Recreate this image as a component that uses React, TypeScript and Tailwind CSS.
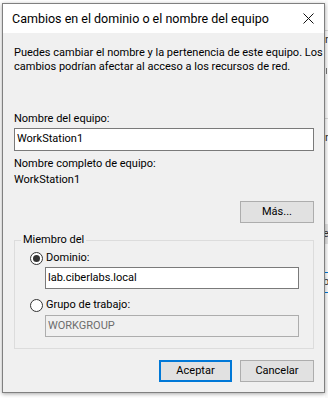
import React from "react";

const font = { fontFamily: "Roboto, 'Liberation Sans', Arial, sans-serif" };

function Radio({ checked }: { checked: boolean }) {
  return (
    <span className="w-[13px] h-[13px] rounded-full border border-[#333333] bg-white flex items-center justify-center shrink-0">
      {checked && <span className="w-[7px] h-[7px] rounded-full bg-[#333333]" />}
    </span>
  );
}

function Btn({ label, primary, w }: { label: string; primary?: boolean; w: string }) {
  return (
    <div
      className={
        "h-[22px] flex items-center justify-center bg-[#e1e1e1] text-[11px] text-black " +
        w +
        (primary ? " border-2 border-[#0078d7]" : " border border-[#adadad]")
      }
    >
      {label}
    </div>
  );
}

export default function App() {
  return (
    <div className="w-[328px] h-[398px] bg-white relative overflow-hidden" style={font}>
      {/* background window fragments on the right */}
      <div className="absolute left-[325px] top-0 w-[3px] h-full bg-[#fafafa]">
        <div className="absolute top-[30px] left-0 w-[3px] h-px bg-[#d8d8d8]" />
        <div className="absolute top-[33px] left-0 text-[11px] leading-[14px] text-[#333] whitespace-nowrap">re</div>
        <div className="absolute top-[68px] left-[1px] w-px h-[6px] bg-[#777]" />
        <div className="absolute top-[118px] left-0 w-[3px] h-px bg-[#d8d8d8]" />
        <div className="absolute top-[131px] left-0 text-[11px] leading-[14px] text-[#333]">r</div>
        <div className="absolute top-[224px] left-0 w-[3px] h-[20px] bg-[#e1e1e1]" />
        <div className="absolute top-[227px] left-[-2px] text-[11px] leading-[14px] text-[#333]">e</div>
        <div className="absolute top-[272px] left-0 w-[3px] h-[21px] border-y border-[#0078d7]" />
        <div className="absolute top-[275px] left-[-2px] text-[11px] leading-[14px] text-[#333]">b</div>
      </div>

      {/* dialog */}
      <div className="absolute left-[2px] top-[3px] w-[323px] h-[390px] border border-[#808080] bg-[#f0f0f0] flex flex-col shadow-[0_1px_4px_rgba(0,0,0,0.35)]">
        {/* title bar */}
        <div className="h-[29px] bg-white flex items-center justify-between pl-[9px] pr-[9px] shrink-0">
          <span className="text-[12.5px] text-black whitespace-nowrap pt-[1px]">
            Cambios en el dominio o el nombre del equipo
          </span>
          <svg width="11" height="11" viewBox="0 0 11 11" className="mr-[1px]">
            <path d="M0.5 0.5 L10.5 10.5 M10.5 0.5 L0.5 10.5" stroke="#111" strokeWidth="1" fill="none" />
          </svg>
        </div>

        {/* body */}
        <div className="flex flex-col pl-[11px] pr-[10px] pt-[13px] text-[11px] leading-[14px] text-black">
          <div className="whitespace-nowrap">
            Puedes cambiar el nombre y la pertenencia de este equipo. Los
            <br />
            cambios podrían afectar al acceso a los recursos de red.
          </div>

          <div className="mt-[38px]">Nombre del equipo:</div>
          <div className="mt-[2px] h-[23px] border border-[#7a7a7a] bg-white flex items-center pl-[2px] pb-[1px]">
            WorkStation1
          </div>

          <div className="mt-[6px]">Nombre completo de equipo:</div>
          <div className="mt-[2px]">WorkStation1</div>

          <div className="mt-[14px] flex justify-end">
            <Btn label="Más..." w="w-[74px]" />
          </div>

          {/* group box */}
          <div className="mt-[17px] relative border border-[#dcdcdc] flex flex-col pb-[11px]">
            <span className="absolute left-[6px] top-[-8px] px-[2px] bg-[#f0f0f0] leading-[14px]">
              Miembro del
            </span>
            <div className="mt-[10px] ml-[15px] h-[14px] flex items-center gap-[3px]">
              <Radio checked />
              <span>Dominio:</span>
            </div>
            <div className="mt-[2px] ml-[30px] w-[254px] h-[22px] border border-[#7a7a7a] bg-white flex items-center pl-[2px] pb-[1px]">
              lab.ciberlabs.local
            </div>
            <div className="mt-[9px] ml-[15px] h-[14px] flex items-center gap-[3px]">
              <Radio checked={false} />
              <span>Grupo de trabajo:</span>
            </div>
            <div className="mt-[3px] ml-[30px] w-[254px] h-[22px] border border-[#adadad] bg-[#f0f0f0] flex items-center pl-[2px] pb-[1px] text-[#6d6d6d]">
              WORKGROUP
            </div>
          </div>

          {/* buttons */}
          <div className="mt-[11px] flex justify-end gap-[8px]">
            <Btn label="Aceptar" primary w="w-[73px]" />
            <Btn label="Cancelar" w="w-[74px]" />
          </div>
        </div>
      </div>
    </div>
  );
}
